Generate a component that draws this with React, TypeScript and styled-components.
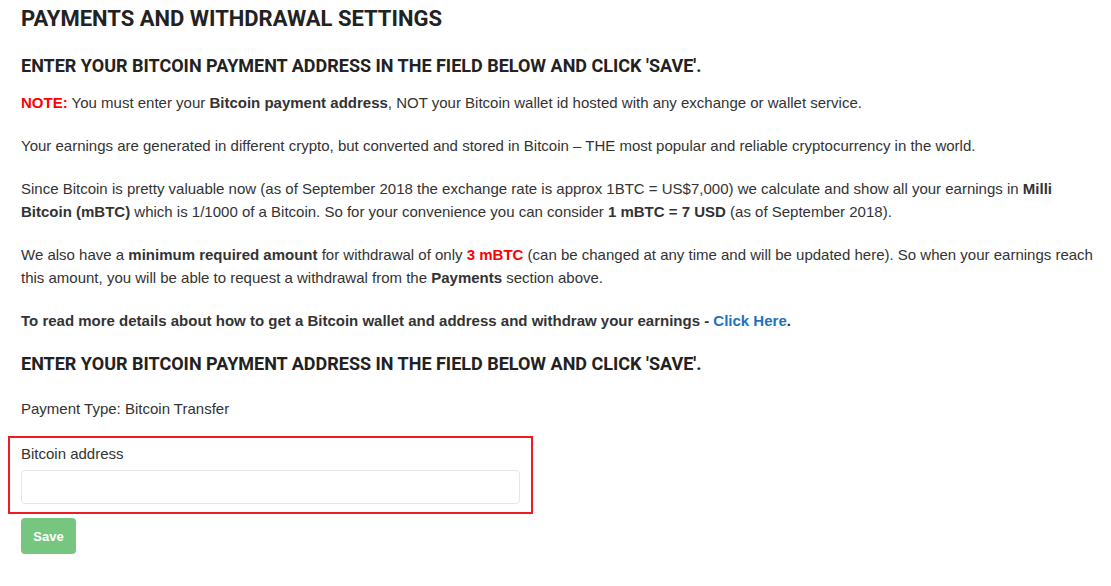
import styled, { createGlobalStyle } from 'styled-components';

const GlobalStyle = createGlobalStyle`
  html, body {
    margin: 0;
    padding: 0;
    background: #ffffff;
  }
  body {
    font-family: 'Liberation Sans', Arial, sans-serif;
    font-size: 15px;
    line-height: 23px;
    color: #333333;
  }
`;

const Page = styled.div`
  padding: 5px 15px 0 21px;
`;

const Title = styled.h1`
  font-family: Roboto, 'Liberation Sans', sans-serif;
  font-weight: 700;
  font-size: 22px;
  line-height: 28px;
  color: #222222;
  margin: 0 0 21px;
`;

const Heading = styled.h3<{ $after?: number }>`
  font-family: Roboto, 'Liberation Sans', sans-serif;
  font-weight: 700;
  font-size: 18px;
  line-height: 24px;
  color: #222222;
  margin: 0 0 ${p => p.$after ?? 20}px;
`;

const Para = styled.p`
  margin: 0 0 20px;
`;

const Red = styled.span`
  color: #ff0000;
  font-weight: 700;
`;

const Link = styled.a`
  color: #1e73be;
  font-weight: 700;
  text-decoration: none;
`;

const FormGroup = styled.div`
  margin: -4px 0 4px -13px;
  width: 499px;
  padding: 4px 11px 8px;
  border: 2px solid #ed1c24;
`;

const Label = styled.label`
  display: block;
  margin-bottom: 5px;
`;

const Input = styled.input`
  display: block;
  box-sizing: border-box;
  width: 100%;
  height: 34px;
  border: 1px solid #e6e6e6;
  border-radius: 4px;
  padding: 6px 12px;
  font-family: inherit;
  font-size: 14px;
  outline: none;
`;

const SaveButton = styled.button`
  width: 55px;
  height: 36px;
  border: none;
  border-radius: 4px;
  background: #77c67f;
  color: #ffffff;
  font-family: 'Liberation Sans', Arial, sans-serif;
  font-weight: 700;
  font-size: 13px;
  padding: 0;
`;

export default function App() {
  return (
    <>
      <GlobalStyle />
      <Page>
        <Title>PAYMENTS AND WITHDRAWAL SETTINGS</Title>
        <Heading $after={13}>ENTER YOUR BITCOIN PAYMENT ADDRESS IN THE FIELD BELOW AND CLICK 'SAVE'.</Heading>
        <Para>
          <Red>NOTE:</Red> You must enter your <b>Bitcoin payment address</b>, NOT your Bitcoin wallet id
          hosted with any exchange or wallet service.
        </Para>
        <Para>
          Your earnings are generated in different crypto, but converted and stored in Bitcoin – THE most
          popular and reliable cryptocurrency in the world.
        </Para>
        <Para>
          Since Bitcoin is pretty valuable now (as of September 2018 the exchange rate is approx 1BTC =
          US$7,000) we calculate and show all your earnings in <b>Milli Bitcoin (mBTC)</b> which is 1/1000 of
          a Bitcoin. So for your convenience you can consider <b>1 mBTC = 7 USD</b> (as of September 2018).
        </Para>
        <Para>
          We also have a <b>minimum required amount</b> for withdrawal of only <Red>3 mBTC</Red> (can be
          changed at any time and will be updated here). So when your earnings reach this amount, you will be
          able to request a withdrawal from the <b>Payments</b> section above.
        </Para>
        <Para>
          <b>
            To read more details about how to get a Bitcoin wallet and address and withdraw your earnings -{' '}
            <Link href="#">Click Here</Link>.
          </b>
        </Para>
        <Heading $after={21}>ENTER YOUR BITCOIN PAYMENT ADDRESS IN THE FIELD BELOW AND CLICK 'SAVE'.</Heading>
        <Para>Payment Type: Bitcoin Transfer</Para>
        <FormGroup>
          <Label>Bitcoin address</Label>
          <Input type="text" />
        </FormGroup>
        <SaveButton>Save</SaveButton>
      </Page>
    </>
  );
}
